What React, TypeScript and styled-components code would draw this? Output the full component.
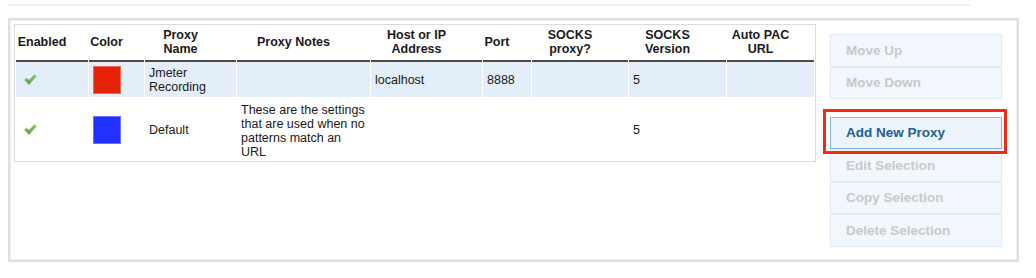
import * as React from 'react';
import styled, { createGlobalStyle } from 'styled-components';

const GlobalStyle = createGlobalStyle`
  html, body {
    margin: 0;
    padding: 0;
    background: #ffffff;
    font-family: "Liberation Sans", Arial, Helvetica, sans-serif;
    color: #1a1a1a;
  }
`;

const Root = styled.div`
  width: 1036px;
  height: 278px;
  padding: 4px 0 0 8px;
  box-sizing: border-box;
`;

const TopRule = styled.div`
  width: 962px;
  height: 2px;
  background: #efefef;
  margin-bottom: 12px;
`;

const Panel = styled.div`
  width: 1011px;
  height: 244px;
  box-sizing: border-box;
  border: 2px solid #dedede;
  box-shadow: inset 0 0 0 1px #f0f0f0;
  padding: 4px 0 0 4px;
  display: flex;
  align-items: flex-start;
  gap: 14px;
`;

const Table = styled.table`
  width: 801px;
  flex: 0 0 801px;
  table-layout: fixed;
  border-collapse: separate;
  border-spacing: 1px 0;
  border: 1px solid #dcdcdc;
  font-size: 12.5px;
  line-height: 14px;
`;

const HeadCell = styled.th`
  box-sizing: border-box;
  height: 37px;
  padding: 2px 20px 4px 0;
  font-weight: bold;
  text-align: center;
  vertical-align: middle;
  color: #1a1a1a;
  border-bottom: 2px solid #4d4d4d;
`;

const Row = styled.tr<{ $selected?: boolean }>`
  background: ${(p) => (p.$selected ? '#e3eef9' : '#ffffff')};
`;

const Cell = styled.td<{ $indent?: number; $h: number; $top?: number }>`
  box-sizing: border-box;
  height: ${(p) => p.$h}px;
  padding: ${(p) => p.$top ?? 0}px 4px 0 ${(p) => p.$indent ?? 4}px;
  vertical-align: middle;
  text-align: left;
  & > svg {
    display: block;
  }
`;

const Swatch = styled.div<{ $color: string; $edge: string }>`
  width: 28px;
  height: 28px;
  box-sizing: border-box;
  background: ${(p) => p.$color};
  border: 1px solid ${(p) => p.$edge};
`;

const Buttons = styled.div`
  width: 172px;
  padding-top: 10px;
  display: flex;
  flex-direction: column;
`;

const Group = styled.div`
  display: flex;
  flex-direction: column;
  & + & {
    margin-top: 17.5px;
  }
`;

const Button = styled.div<{ $enabled?: boolean }>`
  position: relative;
  height: 32.5px;
  box-sizing: border-box;
  padding-left: 15px;
  display: flex;
  align-items: center;
  font-size: 13.5px;
  font-weight: bold;
  background: ${(p) => (p.$enabled ? '#edf4fb' : '#f1f7fd')};
  border: 1px solid ${(p) => (p.$enabled ? '#8bb8e0' : '#dfeaf6')};
  color: ${(p) => (p.$enabled ? '#1f5d95' : '#c9c9c9')};
`;

const Highlight = styled.div`
  position: absolute;
  z-index: 2;
  top: -9px;
  left: -8px;
  right: -6px;
  bottom: -6px;
  border: 3px solid #f62a0e;
  pointer-events: none;
`;

const Check = () => (
  <svg width="13" height="11" viewBox="0 0 13 11">
    <defs>
      <linearGradient id="chk" x1="0" y1="0" x2="0" y2="1">
        <stop offset="0" stopColor="#92cb78" />
        <stop offset="1" stopColor="#5a9c4d" />
      </linearGradient>
    </defs>
    <path d="M0.2 6 L2.7 3.8 L4.9 6 L10.4 0.2 L12.8 2.2 L5 10.7 Z" fill="url(#chk)" />
  </svg>
);

const widths = [72, 55, 91, 133, 111, 48, 96, 97, 87];

const headLabels: React.ReactNode[] = [
  'Enabled',
  'Color',
  <>Proxy<br />Name</>,
  'Proxy Notes',
  <>Host or IP<br />Address</>,
  'Port',
  <>SOCKS<br />proxy?</>,
  <>SOCKS<br />Version</>,
  <>Auto PAC<br />URL</>,
];

export default function App() {
  return (
    <Root>
      <GlobalStyle />
      <TopRule />
      <Panel>
        <Table>
          <colgroup>
            {widths.map((w, i) => (
              <col key={i} style={{ width: w }} />
            ))}
          </colgroup>
          <thead>
            <tr>
              {headLabels.map((label, i) => (
                <HeadCell key={i}>{label}</HeadCell>
              ))}
            </tr>
          </thead>
          <tbody>
            <Row $selected>
              <Cell $h={35} $indent={8}><Check /></Cell>
              <Cell $h={35}><Swatch $color="#e52309" $edge="#ee6a55" /></Cell>
              <Cell $h={35}>Jmeter<br />Recording</Cell>
              <Cell $h={35} />
              <Cell $h={35}>localhost</Cell>
              <Cell $h={35}>8888</Cell>
              <Cell $h={35} />
              <Cell $h={35}>5</Cell>
              <Cell $h={35} />
            </Row>
            <Row>
              <Cell $h={64} $indent={8}><Check /></Cell>
              <Cell $h={64} $top={1}><Swatch $color="#2231ff" $edge="#6a74ff" /></Cell>
              <Cell $h={64} $top={1}>Default</Cell>
              <Cell $h={64} $top={3}>
                These are the settings<br />
                that are used when no<br />
                patterns match an<br />
                URL
              </Cell>
              <Cell $h={64} />
              <Cell $h={64} />
              <Cell $h={64} />
              <Cell $h={64} $top={1}>5</Cell>
              <Cell $h={64} />
            </Row>
          </tbody>
        </Table>
        <Buttons>
          <Group>
            <Button>Move Up</Button>
            <Button>Move Down</Button>
          </Group>
          <Group>
            <Button $enabled>
              Add New Proxy
              <Highlight />
            </Button>
            <Button>Edit Selection</Button>
            <Button>Copy Selection</Button>
            <Button>Delete Selection</Button>
          </Group>
        </Buttons>
      </Panel>
    </Root>
  );
}
